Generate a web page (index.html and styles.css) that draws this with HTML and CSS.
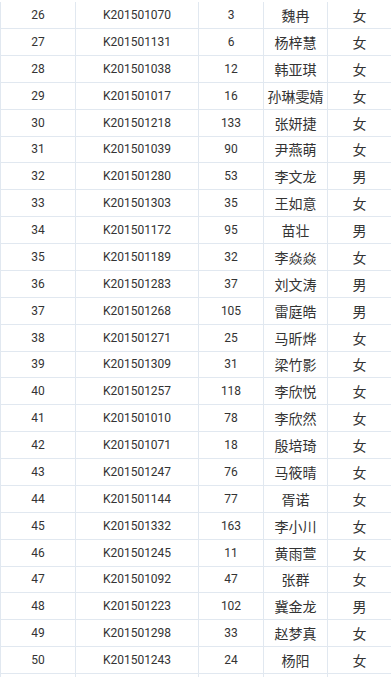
FILE: index.html
```html
<!DOCTYPE html>
<html lang="zh-CN">
<head>
<meta charset="utf-8">
<link rel="stylesheet" href="styles.css">
</head>
<body>
<div class="sheet">
  <div class="row"><div class="c">26</div><div class="c">K201501070</div><div class="c">3</div><div class="c cn">魏冉</div><div class="c cn">女</div></div>
  <div class="row"><div class="c">27</div><div class="c">K201501131</div><div class="c">6</div><div class="c cn">杨梓慧</div><div class="c cn">女</div></div>
  <div class="row"><div class="c">28</div><div class="c">K201501038</div><div class="c">12</div><div class="c cn">韩亚琪</div><div class="c cn">女</div></div>
  <div class="row"><div class="c">29</div><div class="c">K201501017</div><div class="c">16</div><div class="c cn">孙琳雯婧</div><div class="c cn">女</div></div>
  <div class="row"><div class="c">30</div><div class="c">K201501218</div><div class="c">133</div><div class="c cn">张妍捷</div><div class="c cn">女</div></div>
  <div class="row"><div class="c">31</div><div class="c">K201501039</div><div class="c">90</div><div class="c cn">尹燕萌</div><div class="c cn">女</div></div>
  <div class="row"><div class="c">32</div><div class="c">K201501280</div><div class="c">53</div><div class="c cn">李文龙</div><div class="c cn">男</div></div>
  <div class="row"><div class="c">33</div><div class="c">K201501303</div><div class="c">35</div><div class="c cn">王如意</div><div class="c cn">女</div></div>
  <div class="row"><div class="c">34</div><div class="c">K201501172</div><div class="c">95</div><div class="c cn">苗壮</div><div class="c cn">男</div></div>
  <div class="row"><div class="c">35</div><div class="c">K201501189</div><div class="c">32</div><div class="c cn">李焱焱</div><div class="c cn">女</div></div>
  <div class="row"><div class="c">36</div><div class="c">K201501283</div><div class="c">37</div><div class="c cn">刘文涛</div><div class="c cn">男</div></div>
  <div class="row"><div class="c">37</div><div class="c">K201501268</div><div class="c">105</div><div class="c cn">雷庭皓</div><div class="c cn">男</div></div>
  <div class="row"><div class="c">38</div><div class="c">K201501271</div><div class="c">25</div><div class="c cn">马昕烨</div><div class="c cn">女</div></div>
  <div class="row"><div class="c">39</div><div class="c">K201501309</div><div class="c">31</div><div class="c cn">梁竹影</div><div class="c cn">女</div></div>
  <div class="row"><div class="c">40</div><div class="c">K201501257</div><div class="c">118</div><div class="c cn">李欣悦</div><div class="c cn">女</div></div>
  <div class="row"><div class="c">41</div><div class="c">K201501010</div><div class="c">78</div><div class="c cn">李欣然</div><div class="c cn">女</div></div>
  <div class="row"><div class="c">42</div><div class="c">K201501071</div><div class="c">18</div><div class="c cn">殷培琦</div><div class="c cn">女</div></div>
  <div class="row"><div class="c">43</div><div class="c">K201501247</div><div class="c">76</div><div class="c cn">马筱晴</div><div class="c cn">女</div></div>
  <div class="row"><div class="c">44</div><div class="c">K201501144</div><div class="c">77</div><div class="c cn">胥诺</div><div class="c cn">女</div></div>
  <div class="row"><div class="c">45</div><div class="c">K201501332</div><div class="c">163</div><div class="c cn">李小川</div><div class="c cn">女</div></div>
  <div class="row"><div class="c">46</div><div class="c">K201501245</div><div class="c">11</div><div class="c cn">黄雨萱</div><div class="c cn">女</div></div>
  <div class="row"><div class="c">47</div><div class="c">K201501092</div><div class="c">47</div><div class="c cn">张群</div><div class="c cn">女</div></div>
  <div class="row"><div class="c">48</div><div class="c">K201501223</div><div class="c">102</div><div class="c cn">冀金龙</div><div class="c cn">男</div></div>
  <div class="row"><div class="c">49</div><div class="c">K201501298</div><div class="c">33</div><div class="c cn">赵梦真</div><div class="c cn">女</div></div>
  <div class="row"><div class="c">50</div><div class="c">K201501243</div><div class="c">24</div><div class="c cn">杨阳</div><div class="c cn">女</div></div>
  <div class="row"><div class="c"></div><div class="c"></div><div class="c"></div><div class="c"></div><div class="c"></div></div>
</div>
</body>
</html>
```

FILE: styles.css
```css
html, body {
  margin: 0;
  padding: 0;
  background: #ffffff;
}

body {
  width: 391px;
  height: 677px;
  overflow: hidden;
  font-family: Roboto, "Noto Sans CJK SC", sans-serif;
  font-size: 12px;
  color: #333333;
}

.sheet {
  padding-top: 2.125px;
  display: flex;
  flex-direction: column;
}

.row {
  display: grid;
  grid-template-columns: 75px 123px 65px 64px 64px;
  height: 26.875px;
  box-sizing: border-box;
  border-bottom: 1px solid #e1e8f0;
}

.c {
  border-left: 1px solid #e1e8f0;
  display: flex;
  align-items: center;
  justify-content: center;
  white-space: nowrap;
}

.cn {
  font-family: "Noto Sans CJK SC", sans-serif;
  font-size: 14px;
}
```
